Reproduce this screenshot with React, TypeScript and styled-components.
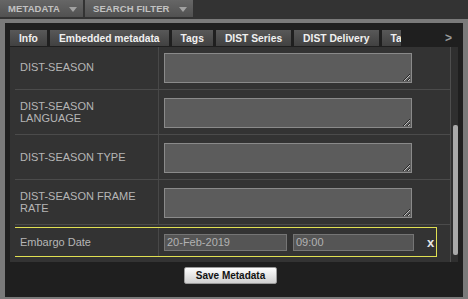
import React from "react";
import styled, { createGlobalStyle } from "styled-components";

const GlobalStyle = createGlobalStyle`
  html, body {
    margin: 0;
    padding: 0;
    background: #7a7a7a;
    font-family: "Liberation Sans", Arial, sans-serif;
  }
`;

const Page = styled.div`
  width: 468px;
  height: 299px;
  display: flex;
  flex-direction: column;
  overflow: hidden;
`;

const TopBar = styled.div`
  height: 19px;
  background: #333;
  display: flex;
  align-items: flex-start;
  gap: 2px;
`;

const TopTab = styled.div`
  height: 17px;
  display: flex;
  align-items: center;
  gap: 9px;
  padding: 0 6px 0 8px;
  background: linear-gradient(#666, #515151);
  color: #c2c2c2;
  font-size: 9.5px;
  font-weight: bold;
  letter-spacing: 0.1px;
`;

const Caret = styled.span`
  width: 0;
  height: 0;
  border-left: 4px solid transparent;
  border-right: 4px solid transparent;
  border-top: 5px solid #a2a2a2;
  margin-top: 1px;
`;

const Panel = styled.div`
  margin: 4px 5px 0 5px;
  height: 267px;
  background: #1f1f1f;
  padding: 7px 5px 0;
  display: flex;
  flex-direction: column;
`;

const TabBar = styled.div`
  height: 16px;
  margin-bottom: 1px;
  display: flex;
  align-items: stretch;
`;

const TabStrip = styled.div`
  width: 391px;
  overflow: hidden;
  display: flex;
  flex-shrink: 0;
`;

const Tab = styled.div`
  flex-shrink: 0;
  padding: 0 9px;
  margin-right: 3px;
  display: flex;
  align-items: center;
  background: linear-gradient(#585858, #414141);
  color: #f0f0f0;
  font-size: 10.3px;
  font-weight: bold;
  white-space: nowrap;
`;

const NextArrow = styled.div`
  flex: 1;
  display: flex;
  align-items: center;
  justify-content: flex-end;
  padding-right: 6px;
  color: #9a9a9a;
  font-size: 12px;
  font-weight: bold;
`;

const Content = styled.div`
  height: 215px;
  background: #333;
  display: flex;
  padding-left: 5px;
`;

const Viewport = styled.div`
  width: 436px;
  overflow: hidden;
  border-right: 1px solid #4e4e4e;
  box-sizing: border-box;
`;

const Rows = styled.div`
  margin-top: -2px;
`;

const Row = styled.div`
  display: flex;
  height: 44px;
  border-bottom: 1px solid #4b4b4b;
`;

const Label = styled.div<{ $width: number; $pad: number }>`
  width: ${(p) => p.$width}px;
  flex-shrink: 0;
  box-sizing: border-box;
  border-right: 1px solid #484848;
  padding: 0 22px 0 ${(p) => p.$pad}px;
  display: flex;
  align-items: center;
  color: #b6b6b6;
  font-size: 11px;
  line-height: 12px;
`;

const Value = styled.div`
  flex: 1;
  padding: 8px 0 0 5px;
  display: flex;
  align-items: flex-start;
`;

const TextArea = styled.textarea`
  width: 248px;
  height: 30px;
  box-sizing: border-box;
  margin: 0;
  background: #5c5c5c;
  border: 1px solid #8a8a8a;
  border-radius: 0;
  outline: none;
  color: #ddd;
  font-family: "Liberation Sans", Arial, sans-serif;
  font-size: 11px;
`;

const HighlightRow = styled.div`
  height: 38px;
  padding-top: 2px;
  box-sizing: border-box;
`;

const Highlight = styled.div`
  margin-left: -3px;
  width: 425px;
  height: 30px;
  box-sizing: border-box;
  border: 1px solid #e0e052;
  display: flex;
`;

const DateValue = styled.div`
  flex: 1;
  display: flex;
  align-items: center;
  padding-left: 5px;
  gap: 6px;
`;

const Field = styled.input<{ $w: number }>`
  width: ${(p) => p.$w}px;
  height: 17px;
  box-sizing: border-box;
  margin: 0;
  padding: 0 2px;
  background: #555;
  border: 1px solid #757575;
  border-radius: 0;
  outline: none;
  color: #b2b2b2;
  font-family: "Liberation Sans", Arial, sans-serif;
  font-size: 11px;
`;

const Clear = styled.span`
  margin-left: 7px;
  color: #e6e6e6;
  font-size: 13px;
  font-weight: bold;
  line-height: 13px;
`;

const Track = styled.div`
  width: 7px;
  flex-shrink: 0;
  background: #2f2f2f;
  padding-left: 2px;
  box-sizing: border-box;
`;

const Thumb = styled.div`
  margin-top: 78px;
  height: 130px;
  background: #a9a9a9;
  border-radius: 2px;
`;

const Footer = styled.div`
  display: flex;
  justify-content: center;
  padding: 5px 7px 0 0;
`;

const SaveButton = styled.button`
  width: 93px;
  height: 17px;
  padding: 0;
  background: linear-gradient(#fdfdfd, #d0d0d0);
  border: 1px solid #9a9a9a;
  border-radius: 2px;
  color: #111;
  font-family: "Liberation Sans", Arial, sans-serif;
  font-size: 10px;
  font-weight: bold;
`;

const fields = [
  "DIST-SEASON",
  "DIST-SEASON LANGUAGE",
  "DIST-SEASON TYPE",
  "DIST-SEASON FRAME RATE",
];

const tabs = ["Info", "Embedded metadata", "Tags", "DIST Series", "DIST Delivery", "Tags"];

export default function App() {
  return (
    <>
      <GlobalStyle />
      <Page>
        <TopBar>
          <TopTab>
            METADATA <Caret />
          </TopTab>
          <TopTab>
            SEARCH FILTER <Caret />
          </TopTab>
        </TopBar>
        <Panel>
          <TabBar>
            <TabStrip>
              {tabs.map((t, i) => (
                <Tab key={i}>{t}</Tab>
              ))}
            </TabStrip>
            <NextArrow>&gt;</NextArrow>
          </TabBar>
          <Content>
            <Viewport>
              <Rows>
                {fields.map((f) => (
                  <Row key={f}>
                    <Label $width={144} $pad={5}>
                      {f}
                    </Label>
                    <Value>
                      <TextArea />
                    </Value>
                  </Row>
                ))}
                <HighlightRow>
                  <Highlight>
                    <Label $width={146} $pad={7}>
                      Embargo Date
                    </Label>
                    <DateValue>
                      <Field $w={123} defaultValue="20-Feb-2019" />
                      <Field $w={121} defaultValue="09:00" />
                      <Clear>x</Clear>
                    </DateValue>
                  </Highlight>
                </HighlightRow>
              </Rows>
            </Viewport>
            <Track>
              <Thumb />
            </Track>
          </Content>
          <Footer>
            <SaveButton>Save Metadata</SaveButton>
          </Footer>
        </Panel>
      </Page>
    </>
  );
}
